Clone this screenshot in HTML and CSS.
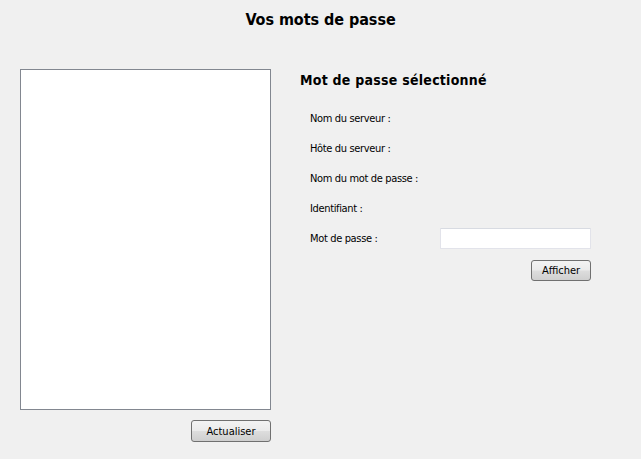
FILE: index.html
```html
<!DOCTYPE html>
<html lang="fr">
<head>
<meta charset="utf-8">
<title>Vos mots de passe</title>
<link rel="stylesheet" href="styles.css">
</head>
<body>
<header class="header"><h1 class="title">Vos mots de passe</h1></header>
<main class="main">
  <section class="left">
    <div class="list"></div>
    <div class="actions"><button class="btn btn-refresh">Actualiser</button></div>
  </section>
  <section class="right">
    <h2 class="subtitle">Mot de passe sélectionné</h2>
    <div class="form">
      <div class="label">Nom du serveur :</div><div class="value"></div>
      <div class="label">Hôte du serveur :</div><div class="value"></div>
      <div class="label">Nom du mot de passe :</div><div class="value"></div>
      <div class="label">Identifiant :</div><div class="value"></div>
      <div class="label">Mot de passe :</div><div class="value"><input class="input" type="password"></div>
    </div>
    <div class="form-actions"><button class="btn btn-show">Afficher</button></div>
  </section>
</main>
</body>
</html>
```
FILE: styles.css
```css
html, body {
  margin: 0;
  padding: 0;
  background: #f0f0f0;
  width: 641px;
  height: 459px;
  overflow: hidden;
  font-family: "DejaVu Sans Condensed", "DejaVu Sans", "Liberation Sans", sans-serif;
  color: #000;
}
.header {
  height: 40px;
  display: flex;
  align-items: center;
  justify-content: center;
}
.title {
  margin: 0;
  font-size: 16px;
  font-weight: bold;
  line-height: 20px;
  letter-spacing: -0.05px;
}
.main {
  display: flex;
  padding: 29px 0 0 20px;
}
.left {
  width: 251px;
  display: flex;
  flex-direction: column;
}
.list {
  height: 339px;
  border: 1px solid #828790;
  background: #fff;
}
.actions {
  display: flex;
  justify-content: flex-end;
  margin-top: 10px;
}
.btn {
  font-family: "DejaVu Sans Condensed", "DejaVu Sans", "Liberation Sans", sans-serif;
  font-size: 11px;
  height: 22px;
  padding: 0;
  border: 1px solid #707070;
  border-radius: 3px;
  background: linear-gradient(#f3f3f3 0%, #ebebeb 48%, #dddddd 52%, #cfcfcf 100%);
  color: #000;
}
.btn-refresh { width: 80px; }
.btn-show { width: 60px; height: 21px; }
.right {
  margin-left: 29px;
  display: flex;
  flex-direction: column;
}
.subtitle {
  margin: 0;
  font-size: 14px;
  font-weight: bold;
  line-height: 22px;
  letter-spacing: 0.25px;
}
.form {
  margin: 12px 0 0 10px;
  display: grid;
  grid-template-columns: 130px 151px;
  grid-auto-rows: 30px;
  align-items: center;
}
.label {
  font-size: 11px;
  letter-spacing: -0.35px;
}
.input {
  box-sizing: border-box;
  display: block;
  width: 151px;
  height: 21px;
  margin: 0;
  border: 1px solid #e2e3ea;
  border-top-color: #d8dbe2;
  background: #fff;
  border-radius: 1px;
}
.form-actions {
  margin: 7px 0 0 10px;
  width: 281px;
  display: flex;
  justify-content: flex-end;
}
```
